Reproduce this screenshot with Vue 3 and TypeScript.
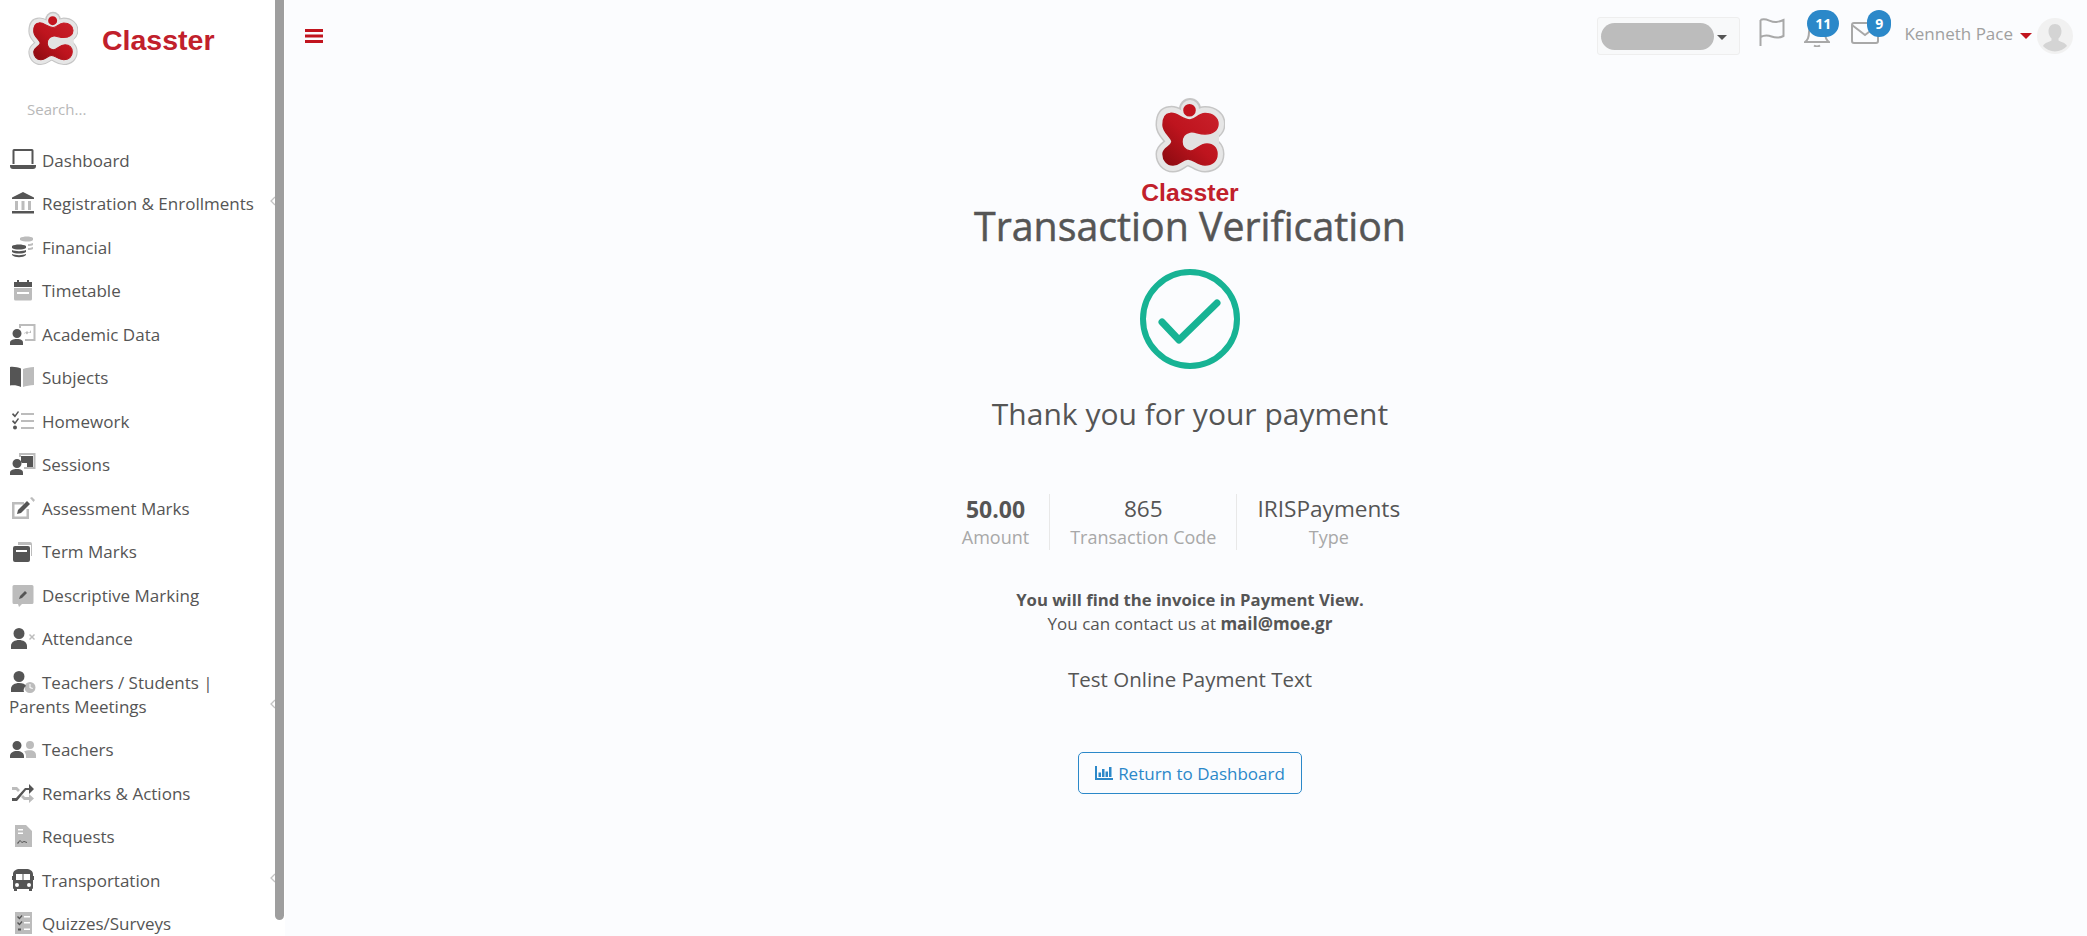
<script setup lang="ts">
interface MenuItem {
  label: string
  dark: string
  light: string
  sub?: boolean
}

const logoBody = 'M15 16.500C22 15 27 23 35 23C41 23 43 16.500 50 16.500C58 16.500 63 21 63 27C63 33 58 37 50 37C43 37 40 34 35 35C30 36 27 40 27 45C27 50 30 53 35 54C40 55 44 47 52 47C58 47 62 51 62 57C62 64 57 68 50 68C42 68 39 62 33 62C27 62 25 68 18 68C12 68 8 63 8 57C8 51 16 50 17 45C17 40 8 36 8 28C8 21 10 17 15 16.500Z'

const menu: MenuItem[] = [
  { label: 'Dashboard', dark: 'M5 0h18a1.500 1.500 0 0 1 1.500 1.500V15h-2V2h-17v13h-2V1.500A1.500 1.500 0 0 1 5 0zM1 16h26v1a3 3 0 0 1-3 3H4a3 3 0 0 1-3-3z', light: '' },
  { label: 'Registration & Enrollments', sub: true, dark: 'M14 0L25 5.500V7H3V5.500zM3 19h22v2.500H3z', light: 'M6 9h3v9H6zM12.500 9h3v9h-3zM19 9h3v9h-3z' },
  { label: 'Financial', dark: 'M3 10c3-2 11-2 14 0v2c-3 2-11 2-14 0zM3 14c3 1.500 11 1.500 14 0v2c-3 2-11 2-14 0zM3 18c3 1.500 11 1.500 14 0v1c-3 3-11 3-14 0z', light: 'M11 2c3-2 11-2 13 0v2c-2 2-9 2-13 0zM19 8c2 0 4-.5 5-1v2c-1 .6-3 1-5 1zM19 12c2 0 4-.5 5-1v2c-1 .6-3 1-5 1z' },
  { label: 'Timetable', dark: 'M5 3h3V1h2v2h8V1h2v2h3v5H5z', light: 'M5 9h18v11a1.500 1.500 0 0 1-1.500 1.500h-15A1.500 1.500 0 0 1 5 20zM8 13v2h12v-2z' },
  { label: 'Academic Data', dark: 'M8 6a4.500 4.500 0 1 1 0 9a4.500 4.500 0 0 1 0-9zM1 22v-2c0-3 3-4 7-4s6 1 6 4v2z', light: 'M10 1h16.500v17H16v-2h8.500V3H12v2h-2zM15 11l3-3 2 2 2-3v3h-1.200l-.8-1-2 2.500-2-2-1 .8z' },
  { label: 'Subjects', dark: 'M1 1c4-.5 8 .5 11 1.500V21C9 19.500 5 19 1 19.500z', light: 'M14 3c3-1 7-2 11-2v18c-4 0-8 1-11 2z' },
  { label: 'Homework', dark: 'M4 3l2 2 3-4 1 1-4 5.500L3 4.500zM4 10l2 2 3-4 1 1-4 5.500L3 11.500zM6 15.500a2 2 0 1 1 0 4a2 2 0 0 1 0-4z', light: 'M12 3h13v2H12zM12 10h13v2H12zM12 17h13v2H12z' },
  { label: 'Sessions', dark: 'M8 6a4.500 4.500 0 1 1 0 9a4.500 4.500 0 0 1 0-9zM1 22v-2c0-3 3-4 7-4s6 1 6 4v2zM12 3h12v11h-6v-4h-6z', light: 'M10 0h16.500v16H15v-2h9.500V2H12v2h-2z' },
  { label: 'Assessment Marks', dark: 'M9 13l9-9 3 3-9 9-4 1z', light: 'M3 5h12v2.500H5.500V19.500h12V12H20v10H3zM21 1l2-1 3 3-1.500 2z' },
  { label: 'Term Marks', dark: 'M6 6h13a2 2 0 0 1 2 2v12a2 2 0 0 1-2 2H6a2 2 0 0 1-2-2V8a2 2 0 0 1 2-2zM7 10v2h11v-2z', light: 'M9 2h12a2 2 0 0 1 2 2v12h-1V5H9z' },
  { label: 'Descriptive Marking', dark: 'M11 12l5-5 2 2-5 5-3 1z', light: 'M5 1h18a1.500 1.500 0 0 1 1.500 1.500v16A1.500 1.500 0 0 1 23 20H13l-3 3-1-3H5a1.500 1.500 0 0 1-1.500-1.500v-16A1.500 1.500 0 0 1 5 1z' },
  { label: 'Attendance', dark: 'M10 1a5.500 5.500 0 1 1 0 11a5.500 5.500 0 0 1 0-11zM2 22v-3c0-4 4-6 8-6s8 2 8 6v3z', light: 'M21 7l2 2 2-2 1 1-2 2 2 2-1 1-2-2-2 2-1-1 2-2-2-2z' },
  { label: 'Teachers / Students | Parents Meetings', sub: true, dark: 'M10 0a5.500 5.500 0 1 1 0 11a5.500 5.500 0 0 1 0-11zM2 21v-3c0-4 4-6 8-6s6 1 7 3c-2 1-3 4-2 6z', light: 'M21 11a5.500 5.500 0 1 1 0 11a5.500 5.500 0 0 1 0-11zM20.500 13v4l3 1 .4-1-2.400-.8V13z' },
  { label: 'Teachers', dark: 'M8 3a4.500 4.500 0 1 1 0 9a4.500 4.500 0 0 1 0-9zM1 20v-2c0-3 3-5 7-5s7 2 7 5v2z', light: 'M21 3a4 4 0 1 1 0 8a4 4 0 0 1 0-8zM17 20v-2c0-2-.8-3.500-2-4.500c1.500-.8 3.500-1.200 6-1.200c3.500 0 6 1.700 6 5v2.700z' },
  { label: 'Remarks & Actions', dark: 'M3 16h4L16 6h4V2l5 5-5 5V8h-3L8 19H3z', light: 'M3 5h5l3 3-2 2-2-2H3zM14 13l2 2h4v-3l5 4.500L20 21v-3h-5l-3-3z' },
  { label: 'Requests', dark: 'M8 18l3-3 2 2 2-1 3 1v1l-3-1-2 1-2-2-2 3z', light: 'M6 0h11l6 6v16H6zM9 4v1.500h5V4zM9 7.500V9h5V7.500z' },
  { label: 'Transportation', sub: true, dark: 'M11 0h6c4 0 7 2 7 5v2h1v4h-1v8a1 1 0 0 1-1 1v2h-3v-2H8v2H5v-2a1 1 0 0 1-1-1v-8H3V7h1V5c0-3 3-5 7-5zM7 5v6h6.500V5zM14.500 5v6H21V5zM8 14a2 2 0 1 0 0 4a2 2 0 0 0 0-4zM20 14a2 2 0 1 0 0 4a2 2 0 0 0 0-4z', light: '' },
  { label: 'Quizzes/Surveys', dark: 'M9 4l1.500 1.500 2-2.500 1 1-3 3.500L8 5zM9 10l1.500 1.500 2-2.500 1 1-3 3.500L8 11zM9 16.500h3v2H9z', light: 'M6 0h17v22H6zM15 4v1.500h6V4zM15 10v1.500h6V10zM15 16.500V18h6v-1.500z' }
]

const stats = [
  { value: '50.00', label: 'Amount', strong: true },
  { value: '865', label: 'Transaction Code', strong: false },
  { value: 'IRISPayments', label: 'Type', strong: false }
]
</script>

<template>
  <div class="page">
    <aside class="sidebar">
      <div class="brand">
        <svg class="brand-mark" viewBox="0 0 70 78">
          <defs>
            <linearGradient id="logoRed" x1="0" y1="1" x2="1" y2="0">
              <stop offset="0" stop-color="#8a0a10" />
              <stop offset="0.5" stop-color="#be141e" />
              <stop offset="1" stop-color="#c9202a" />
            </linearGradient>
            <g id="classterLogo">
              <path d="M35 1a11 11 0 1 1 0 22a11 11 0 0 1 0-22z" fill="#c6c6c6" />
              <path :d="logoBody" fill="#c6c6c6" stroke="#c6c6c6" stroke-width="15" stroke-linejoin="round" />
              <path :d="logoBody" fill="#e6e6e6" stroke="#e6e6e6" stroke-width="12" stroke-linejoin="round" />
              <path d="M35 3a9 9 0 1 1 0 18a9 9 0 0 1 0-18z" fill="#e6e6e6" />
              <path d="M28 34h36v21H28z" fill="#e2e2e2" />
              <path :d="logoBody" fill="url(#logoRed)" stroke="url(#logoRed)" stroke-width="1.500" stroke-linejoin="round" />
              <path d="M34.500 7a6.300 6.300 0 1 1 0 12.600a6.300 6.300 0 0 1 0-12.600z" fill="#c2141e" />
            </g>
          </defs>
          <use href="#classterLogo" />
        </svg>
        <span class="brand-name">Classter</span>
      </div>
      <div class="search">Search...</div>
      <ul class="menu">
        <li v-for="item in menu" :key="item.label" class="menu-item">
          <svg class="menu-icon" viewBox="0 0 28 23">
            <path :d="item.light" fill="#bcbcbc" fill-rule="evenodd" />
            <path :d="item.dark" fill="#555" fill-rule="evenodd" />
          </svg>
          <span>{{ item.label }}</span>
          <svg v-if="item.sub" class="chevron" viewBox="0 0 6 10">
            <path d="M5 1L1 5l4 4" fill="none" stroke="#c4c4c4" stroke-width="1.300" />
          </svg>
        </li>
      </ul>
      <div class="scroll-thumb"></div>
    </aside>

    <main class="main">
      <header class="topbar">
        <svg class="burger" viewBox="0 0 18 14">
          <path d="M0 0h18v3H0zM0 5.500h18v3H0zM0 11h18v3H0z" fill="#c1141e" />
        </svg>
        <div class="top-right">
          <div class="select">
            <span class="select-blur"></span>
            <span class="caret dark"></span>
          </div>
          <svg class="flag" viewBox="0 0 28 30">
            <path d="M2.500 3v26M2.500 3c6-3 10 3 16 2c3-.4 5-1 7-2v16c-5 2.500-8 2-12 .5c-4-1.500-7-1.500-11 .5" fill="none" stroke="#a8a8a8" stroke-width="2" />
          </svg>
          <div class="notify bell">
            <svg viewBox="0 0 26 24">
              <path d="M1 19c3-2 4-5 4-10a8 8 0 0 1 16 0c0 5 1 8 4 10zM10 22.500c1.500 1 4.500 1 6 0" fill="none" stroke="#a8a8a8" stroke-width="2" />
            </svg>
            <span class="badge badge-wide">11</span>
          </div>
          <div class="notify mail">
            <svg viewBox="0 0 28 22">
              <rect x="1" y="1" width="26" height="20" rx="2" fill="none" stroke="#a8a8a8" stroke-width="2" />
              <path d="M1 3l13 10 13-10" fill="none" stroke="#a8a8a8" stroke-width="2" />
            </svg>
            <span class="badge">9</span>
          </div>
          <span class="user-name">Kenneth Pace</span>
          <span class="caret red"></span>
          <svg class="avatar" viewBox="0 0 36 36">
            <circle cx="18" cy="18" r="18" fill="#f1f1f1" />
            <path d="M18 6c4 0 6.500 3 6.500 7.500c0 3-1.500 5.500-3 7v2c2 1.500 7 2 8.500 5.500a16 16 0 0 1-24 0c1.500-3.500 6.500-4 8.500-5.500v-2c-1.500-1.500-3-4-3-7C11.500 9 14 6 18 6z" fill="#d4d4d4" />
          </svg>
        </div>
      </header>

      <section class="content">
        <svg class="hero-logo" viewBox="0 0 70 78">
          <use href="#classterLogo" />
        </svg>
        <div class="hero-name">Classter</div>
        <h1 class="title">Transaction Verification</h1>
        <svg class="check" viewBox="0 0 100 100">
          <circle cx="50" cy="50" r="47" fill="none" stroke="#17b394" stroke-width="6" />
          <path d="M22 53l17 18 38-37" fill="none" stroke="#17b394" stroke-width="7" stroke-linecap="round" stroke-linejoin="round" />
        </svg>
        <h2 class="thanks">Thank you for your payment</h2>
        <div class="stats">
          <div v-for="stat in stats" :key="stat.label" class="stat">
            <div class="stat-value" :class="{ strong: stat.strong }">{{ stat.value }}</div>
            <div class="stat-label">{{ stat.label }}</div>
          </div>
        </div>
        <p class="notes">
          <b class="lead">You will find the invoice in Payment View.</b><br />
          You can contact us at <b>mail@moe.gr</b>
        </p>
        <p class="test-text">Test Online Payment Text</p>
        <button class="return-btn" type="button">
          <svg viewBox="0 0 18 14">
            <path d="M0 0h2v12H18V14H0zM3.500 6.500h2.500v4.500H3.500zM7 3h2.500v8H7zM10.500 5.500h2.500v5.500h-2.500zM14 1h2.500v10H14z" fill="#2b88c9" />
          </svg>
          Return to Dashboard
        </button>
      </section>
    </main>
  </div>
</template>

<style>
html,
body {
  margin: 0;
  background: #fbfcfe;
}
</style>

<style scoped>
.page {
  display: flex;
  height: 936px;
  overflow: hidden;
  font-family: "Open Sans", "Liberation Sans", sans-serif;
  color: #555;
  background: #fbfcfe;
}

.sidebar {
  position: relative;
  flex: 0 0 285px;
  height: 936px;
  overflow: hidden;
  background: #fff;
  box-sizing: border-box;
}

.scroll-thumb {
  position: absolute;
  top: 0;
  right: 1px;
  width: 9px;
  height: 920px;
  background: #9e9e9e;
  border-radius: 0 0 5px 5px;
}

.brand {
  display: flex;
  align-items: center;
  height: 78px;
  padding-left: 28px;
  gap: 24px;
}

.brand-mark {
  width: 50px;
  height: 56px;
}

.brand-name {
  font-family: "Liberation Sans", Arial, sans-serif;
  font-weight: 700;
  font-size: 28.500px;
  padding-top: 2px;
  color: #c1202b;
}

.search {
  padding: 20px 0 0 27px;
  height: 31px;
  font-size: 15px;
  line-height: 22px;
  color: #b8b8b8;
}

.menu {
  list-style: none;
  margin: 0;
  padding: 10px 0 0;
}

.menu-item {
  position: relative;
  padding: 9.750px 20px 9.750px 9px;
  font-size: 17px;
  line-height: 24px;
  color: #555;
}

.menu-icon {
  width: 28px;
  height: 23px;
  margin-right: 5px;
  vertical-align: -5px;
}

.chevron {
  position: absolute;
  bottom: 20px;
  left: 270px;
  width: 6px;
  height: 10px;
}

.main {
  flex: 1;
  min-width: 0;
}

.topbar {
  display: flex;
  align-items: center;
  justify-content: space-between;
  height: 72px;
  padding: 0 14px 0 20px;
  box-sizing: border-box;
}

.burger {
  width: 18px;
  height: 14px;
}

.top-right {
  display: flex;
  align-items: center;
}

.select {
  display: flex;
  align-items: center;
  justify-content: space-between;
  box-sizing: border-box;
  width: 143px;
  height: 38px;
  padding: 0 12px 0 3px;
  background: #f8f9fa;
  border: 1px solid #eeeeee;
  border-radius: 3px;
}

.select-blur {
  width: 113px;
  height: 27px;
  border-radius: 14px;
  background: #bcbcbc;
}

.caret {
  width: 0;
  height: 0;
  border-left: 5px solid transparent;
  border-right: 5px solid transparent;
  border-top: 5px solid #555;
}

.caret.dark {
  margin-top: 2px;
}

.caret.red {
  border-left-width: 6px;
  border-right-width: 6px;
  border-top: 6px solid #c1141e;
  margin: 0 5px 0 7px;
}

.flag {
  width: 28px;
  height: 30px;
  margin: 0 0 8px 18px;
}

.notify {
  position: relative;
}

.notify svg {
  display: block;
}

.bell {
  margin: 0 0 2px 18px;
  width: 26px;
  height: 24px;
}

.mail {
  margin: 0 0 6px 21px;
  width: 28px;
  height: 22px;
}

.badge {
  position: absolute;
  top: -12px;
  left: 16px;
  min-width: 24px;
  height: 27px;
  border-radius: 14px;
  background: #2b88c9;
  color: #fff;
  font-size: 14px;
  font-weight: 700;
  line-height: 27px;
  text-align: center;
}

.badge-wide {
  top: -13px;
  left: 3px;
  min-width: 32px;
}

.user-name {
  margin: 0 0 6px 25px;
  font-size: 17px;
  color: #a0a0a0;
}

.avatar {
  width: 36px;
  height: 36px;
}

.content {
  display: flex;
  flex-direction: column;
  align-items: center;
  padding-left: 8px;
}

.hero-logo {
  width: 70px;
  height: 78px;
  margin-top: 25px;
}

.hero-name {
  font-family: "Liberation Sans", Arial, sans-serif;
  font-weight: 700;
  font-size: 24.700px;
  line-height: 26px;
  margin-top: 5px;
  color: #c1202b;
}

.title {
  margin: 0;
  font-size: 39.300px;
  font-weight: 400;
  line-height: 40px;
  color: #555;
  -webkit-text-stroke: 0.5px #555;
}

.check {
  width: 100px;
  height: 100px;
  margin-top: 23px;
}

.thanks {
  margin: 24.500px 0 0;
  font-size: 30px;
  font-weight: 400;
  line-height: 40px;
  color: #555;
}

.stats {
  display: flex;
  margin: 60.500px 18px 0 0;
}

.stat {
  padding: 0 20px;
  text-align: center;
  border-left: 1px solid #e8e8e8;
}

.stat:first-child {
  border-left: 0;
}

.stat-value {
  font-size: 22.600px;
  line-height: 30px;
  color: #555;
}

.stat-value.strong {
  font-size: 23px;
  font-weight: 700;
}

.stat-label {
  font-size: 18px;
  line-height: 26px;
  color: #a8a8a8;
}

.notes {
  margin: 38px 0 0;
  font-size: 17px;
  line-height: 24px;
  text-align: center;
  color: #555;
}

.notes .lead {
  font-size: 16.700px;
}

.test-text {
  margin: 29px 0 0;
  font-size: 20.500px;
  line-height: 28px;
}

.return-btn {
  display: flex;
  align-items: center;
  justify-content: center;
  gap: 5px;
  width: 224px;
  height: 42px;
  margin-top: 59px;
  padding: 0;
  font-family: inherit;
  font-size: 17px;
  color: #2b88c9;
  background: transparent;
  border: 1px solid #2b88c9;
  border-radius: 5px;
}

.return-btn svg {
  width: 18px;
  height: 14px;
}
</style>
